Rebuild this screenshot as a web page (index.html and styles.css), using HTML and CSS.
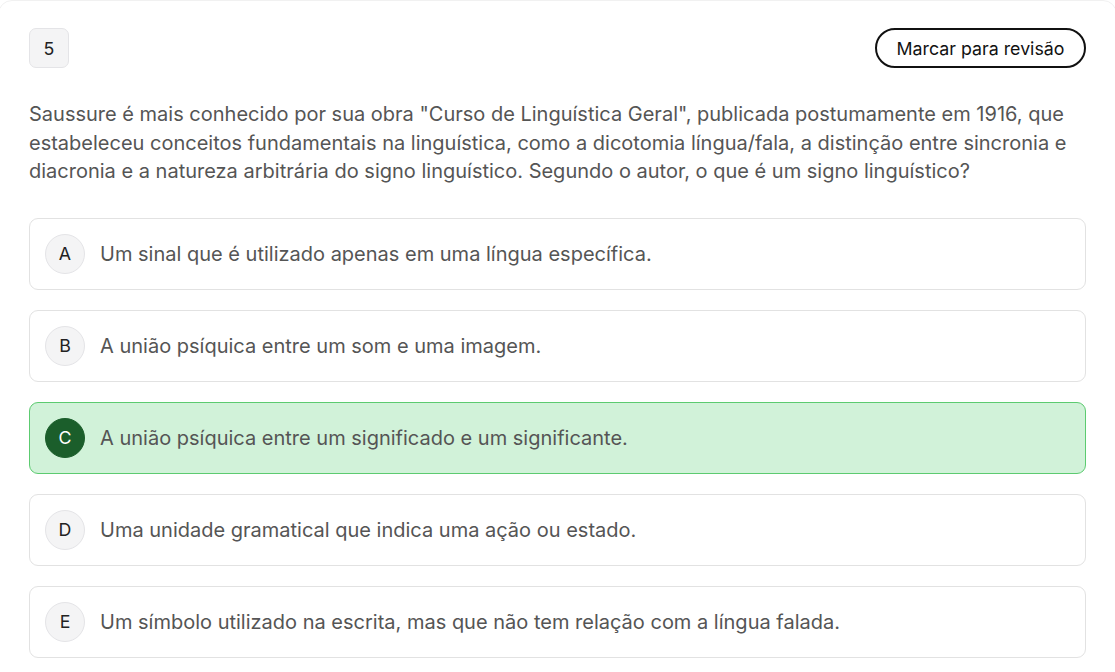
FILE: index.html
```html
<!DOCTYPE html>
<html lang="pt">
<head>
<meta charset="utf-8">
<title>Questão 5</title>
<link rel="stylesheet" href="styles.css">
</head>
<body>
<main class="card">
  <header class="head">
    <span class="num">5</span>
    <button class="mark" type="button">Marcar para revisão</button>
  </header>
  <p class="question">Saussure é mais conhecido por sua obra "Curso de Linguística Geral", publicada postumamente em 1916, que estabeleceu conceitos fundamentais na linguística, como a dicotomia língua/fala, a distinção entre sincronia e diacronia e a natureza arbitrária do signo linguístico. Segundo o autor, o que é um signo linguístico?</p>
  <ul class="options">
    <li class="option"><span class="letter">A</span><span class="text">Um sinal que é utilizado apenas em uma língua específica.</span></li>
    <li class="option"><span class="letter">B</span><span class="text">A união psíquica entre um som e uma imagem.</span></li>
    <li class="option selected"><span class="letter">C</span><span class="text">A união psíquica entre um significado e um significante.</span></li>
    <li class="option"><span class="letter">D</span><span class="text">Uma unidade gramatical que indica uma ação ou estado.</span></li>
    <li class="option"><span class="letter">E</span><span class="text">Um símbolo utilizado na escrita, mas que não tem relação com a língua falada.</span></li>
  </ul>
</main>
</body>
</html>
```

FILE: styles.css
```css
* { box-sizing: border-box; }
html, body { margin: 0; padding: 0; background: #fff; }
body {
  font-family: Inter, "Noto Sans", sans-serif;
  color: #555;
  overflow: hidden;
}
.card {
  margin: 0 -2px;
  padding: 27px 30px 40px;
  border: 1px solid #f1f1f1;
  border-radius: 14px;
  min-height: 700px;
}
.head {
  display: flex;
  justify-content: space-between;
  align-items: center;
  height: 40px;
}
.num {
  width: 40px;
  height: 40px;
  display: flex;
  align-items: center;
  justify-content: center;
  background: #f4f4f5;
  border: 1px solid #e4e4e7;
  border-radius: 7px;
  font-size: 17.8px;
  color: #222;
}
.mark {
  height: 40px;
  width: 211px;
  border: 2px solid #111;
  border-radius: 20px;
  background: #fff;
  font-family: inherit;
  font-size: 17.8px;
  color: #111;
  padding: 0;
}
.question {
  margin: 32px 0 0;
  font-size: 20px;
  line-height: 28.6px;
  color: #555;
}
.options {
  list-style: none;
  margin: 32px 0 0;
  padding: 0;
  display: flex;
  flex-direction: column;
  gap: 20px;
}
.option {
  display: flex;
  align-items: center;
  gap: 15px;
  height: 72px;
  padding: 0 15px;
  border: 1px solid #e2e2e2;
  border-radius: 9px;
  background: #fff;
}
.letter {
  flex: none;
  width: 40px;
  height: 40px;
  border-radius: 50%;
  display: flex;
  align-items: center;
  justify-content: center;
  background: #f4f4f5;
  border: 1px solid #e4e4e7;
  font-size: 17.8px;
  color: #222;
}
.text {
  font-size: 20px;
  color: #555;
}
.option.selected {
  background: #d1f2d9;
  border-color: #5ccb70;
}
.option.selected .letter {
  background: #1b5e2b;
  border-color: #1b5e2b;
  color: #fff;
}
```
